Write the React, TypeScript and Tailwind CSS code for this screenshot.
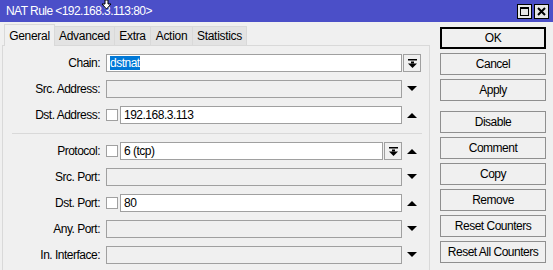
import * as React from 'react'

const font = { fontFamily: '"Liberation Sans", Arial, sans-serif' }

// small black glyphs used at the end of the rows
function DownArrow() {
  return (
    <svg width="10" height="6" viewBox="0 0 10 6">
      <path d="M0 0H10L5 5Z" fill="#000" />
    </svg>
  )
}

function UpArrow() {
  return (
    <svg width="10" height="6" viewBox="0 0 10 6">
      <path d="M0 6H10L5 1Z" fill="#000" />
    </svg>
  )
}

function DropButton() {
  return (
    <div className="w-[18px] h-[18px] border border-[#a0a0a0] bg-[#f0f0f0] flex items-center justify-center shrink-0">
      <svg width="9" height="9" viewBox="0 0 9 9">
        <rect x="0" y="0" width="9" height="1.5" fill="#000" />
        <rect x="3" y="2.5" width="3" height="2" fill="#000" />
        <path d="M0 4.5H9L4.5 9Z" fill="#000" />
      </svg>
    </div>
  )
}

function Checkbox() {
  return <div className="w-[12px] h-[12px] border border-[#a0a0a0] bg-white shrink-0" />
}

function Row({ label, children, trail }: { label: string; children: React.ReactNode; trail?: React.ReactNode }) {
  return (
    <div className="flex items-center h-[18px]">
      <div className="w-[97px] text-right shrink-0 whitespace-nowrap">{label}</div>
      <div className="ml-[6px] w-[296px] flex items-center h-[18px]">{children}</div>
      <div className="w-[20px] h-[18px] flex items-center justify-center">{trail}</div>
    </div>
  )
}

function Field({ value, disabled, selected }: { value?: string; disabled?: boolean; selected?: boolean }) {
  return (
    <div
      className={
        'flex-1 h-[18px] border border-[#a0a0a0] flex items-center pl-[3px] ' +
        (disabled ? 'bg-[#f0f0f0]' : 'bg-white')
      }
    >
      {value && (
        <span className={selected ? 'bg-[#0078d7] text-white leading-[14px]' : 'leading-[14px]'}>{value}</span>
      )}
    </div>
  )
}

const otherTabs: [string, string][] = [
  ['Advanced', 'w-[60px]'],
  ['Extra', 'w-[36px]'],
  ['Action', 'w-[42px]'],
  ['Statistics', 'w-[54px]'],
]
const buttons = ['OK', 'Cancel', 'Apply', 'Disable', 'Comment', 'Copy', 'Remove', 'Reset Counters', 'Reset All Counters']

export default function App() {
  return (
    <div className="w-[553px] h-[270px] overflow-hidden bg-[#f0f0f0] text-[12px] tracking-[-0.5px] text-black" style={font}>
      {/* title bar */}
      <div className="relative h-[22px] bg-[#4b4fc8] flex items-center pl-[6px] text-white">
        <span className="tracking-[-0.55px]">NAT Rule &lt;192.168.3.113:80&gt;</span>
        <svg className="absolute left-[101px] top-0" width="11" height="10" viewBox="0 0 11 10">
          <path d="M4 0H7V4H10L5.5 9L1 4H4Z" fill="#fff" stroke="#000" strokeWidth="1" />
        </svg>
        <div className="ml-auto mr-[4px] flex gap-[2px]">
          <div className="w-[15px] h-[15px] border border-black bg-[#e6e6e6] flex items-center justify-center">
            <div className="w-[9px] h-[9px] border border-black border-t-2" />
          </div>
          <div className="w-[15px] h-[15px] border border-black bg-[#e6e6e6] flex items-center justify-center">
            <svg width="9" height="9" viewBox="0 0 9 9">
              <path d="M1 1L8 8M8 1L1 8" stroke="#000" strokeWidth="2" />
            </svg>
          </div>
        </div>
      </div>

      <div className="flex">
        {/* tabs + panel */}
        <div className="w-[430px] pl-[2px] pt-[2px]">
          <div className="flex items-end h-[21px] pl-[2px] relative z-10 tracking-[-0.3px]">
            <div className="h-[22px] w-[51px] border border-b-0 border-[#d9d9d9] bg-[#f0f0f0] flex items-center justify-center -mb-[1px]">
              General
            </div>
            {otherTabs.map(([t, w]) => (
              <div
                key={t}
                className={'h-[19px] border border-l-0 border-b-0 border-[#d9d9d9] bg-[#e3e3e3] flex items-center justify-center ' + w}
              >
                {t}
              </div>
            ))}
          </div>
          <div className="h-[230px] border border-[#d9d9d9] pt-[8px]">
            <div className="flex flex-col gap-[8px]">
              <Row label="Chain:" trail={<DropButton />}>
                <Field value="dstnat" selected />
              </Row>
              <Row label="Src. Address:" trail={<DownArrow />}>
                <Field disabled />
              </Row>
              <Row label="Dst. Address:" trail={<UpArrow />}>
                <Checkbox />
                <div className="w-[2px]" />
                <Field value="192.168.3.113" />
              </Row>
            </div>
            <div className="mt-[9px] ml-[9px] w-[410px] h-px bg-[#d9d9d9]" />
            <div className="mt-[8px] flex flex-col gap-[8px]">
              <Row label="Protocol:" trail={<UpArrow />}>
                <Checkbox />
                <div className="w-[2px]" />
                <Field value="6 (tcp)" />
                <div className="w-[1px]" />
                <DropButton />
              </Row>
              <Row label="Src. Port:" trail={<DownArrow />}>
                <Field disabled />
              </Row>
              <Row label="Dst. Port:" trail={<UpArrow />}>
                <Checkbox />
                <div className="w-[2px]" />
                <Field value="80" />
              </Row>
              <Row label="Any. Port:" trail={<DownArrow />}>
                <Field disabled />
              </Row>
              <Row label="In. Interface:" trail={<DownArrow />}>
                <Field disabled />
              </Row>
            </div>
          </div>
        </div>

        {/* buttons */}
        <div className="ml-[10px] pt-[5px] w-[106px] flex flex-col gap-[4px]">
          {buttons.map((b, i) => (
            <div
              key={b}
              className={
                'h-[22px] flex items-center justify-center bg-[#f0f0f0] ' +
                (i === 0 ? 'border-2 border-black' : 'border border-[#8f8f8f]') +
                (i === 3 ? ' mt-[6px]' : '')
              }
            >
              {b}
            </div>
          ))}
        </div>
      </div>
    </div>
  )
}
